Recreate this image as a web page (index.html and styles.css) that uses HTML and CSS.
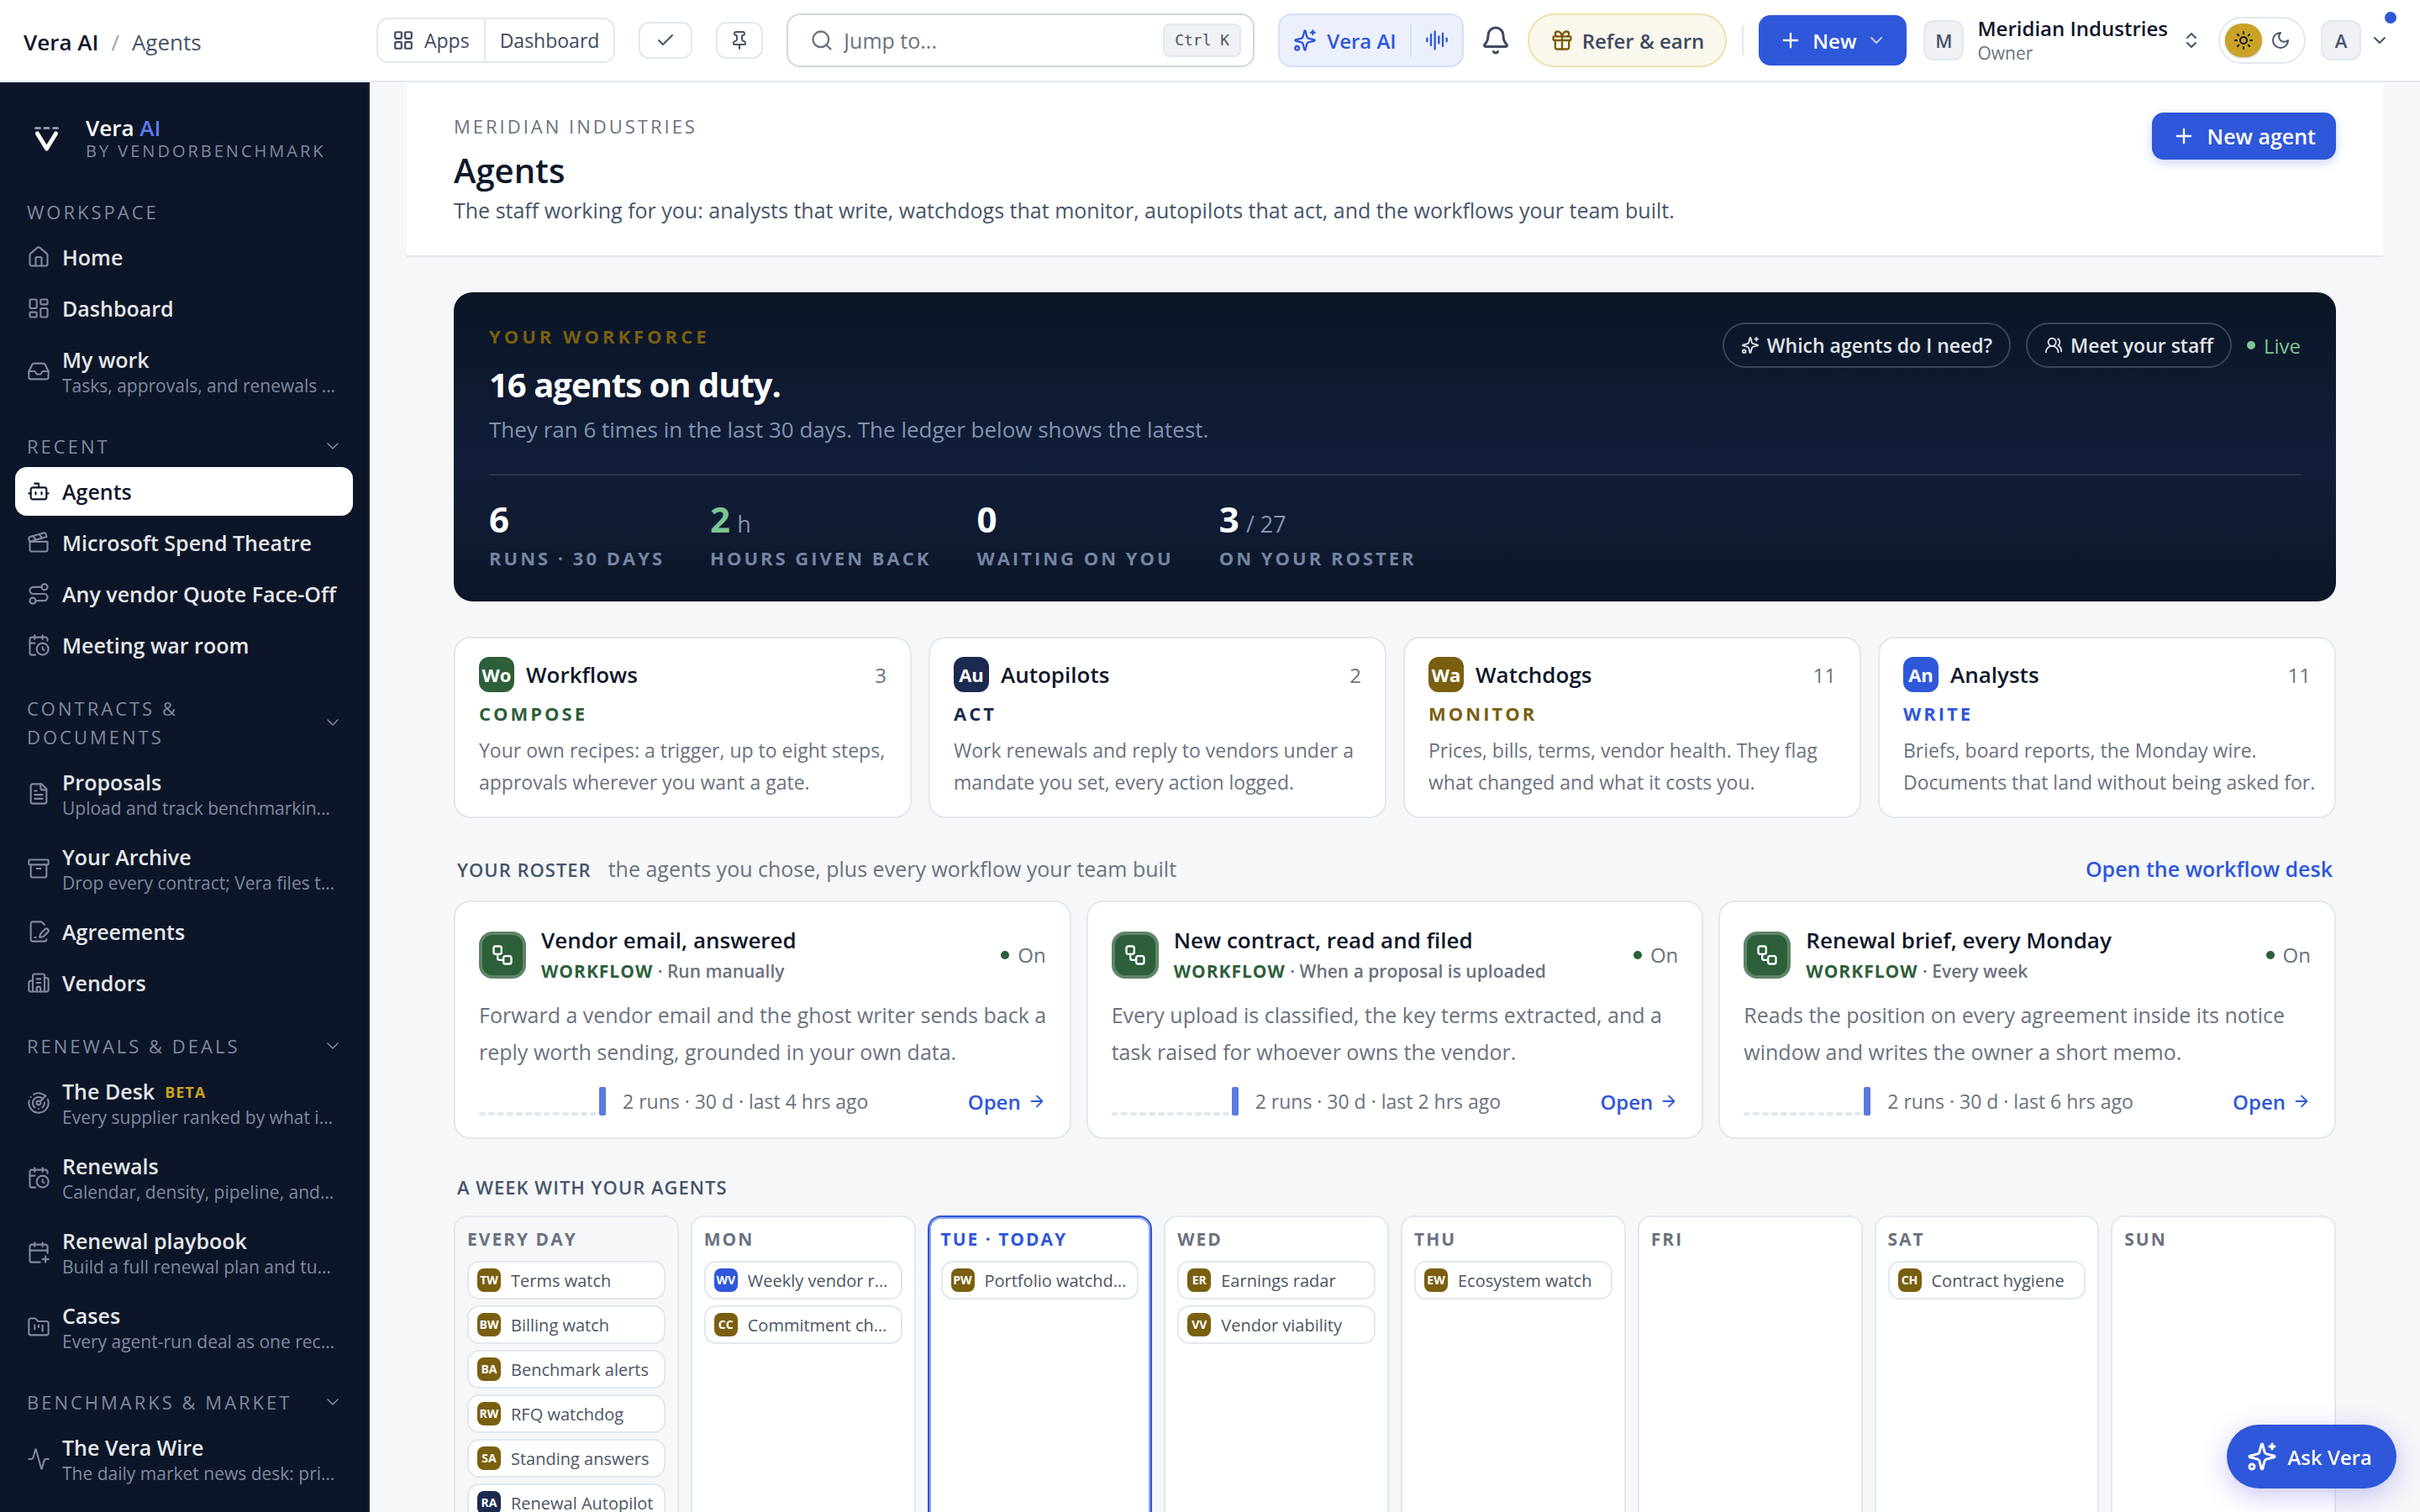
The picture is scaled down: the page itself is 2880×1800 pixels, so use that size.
FILE: index.html
```html
<!DOCTYPE html>
<html lang="en">
<head>
    <meta charset="UTF-8">
    <meta name="viewport" content="width=device-width, initial-scale=1.0">
    <title>Agents - Vera AI</title>
    <link rel="stylesheet" href="styles.css">
</head>
<body>
    <!-- icon sprite -->
    <svg class="sprite" aria-hidden="true">
        <symbol id="i-grid" viewBox="0 0 24 24"><rect x="3" y="3" width="7" height="7" rx="1"/><rect x="14" y="3" width="7" height="7" rx="1"/><rect x="14" y="14" width="7" height="7" rx="1"/><rect x="3" y="14" width="7" height="7" rx="1"/></symbol>
        <symbol id="i-dash" viewBox="0 0 24 24"><rect x="3" y="3" width="7" height="9" rx="1"/><rect x="14" y="3" width="7" height="5" rx="1"/><rect x="14" y="12" width="7" height="9" rx="1"/><rect x="3" y="16" width="7" height="5" rx="1"/></symbol>
        <symbol id="i-check" viewBox="0 0 24 24"><path d="M20 6 9 17l-5-5"/></symbol>
        <symbol id="i-pin" viewBox="0 0 24 24"><path d="M12 17v5"/><path d="M9 10.76a2 2 0 0 1-1.11 1.79l-1.78.9A2 2 0 0 0 5 15.24V16a1 1 0 0 0 1 1h12a1 1 0 0 0 1-1v-.76a2 2 0 0 0-1.11-1.79l-1.78-.9A2 2 0 0 1 15 10.76V7a1 1 0 0 1 1-1 2 2 0 0 0 0-4H8a2 2 0 0 0 0 4 1 1 0 0 1 1 1z"/></symbol>
        <symbol id="i-search" viewBox="0 0 24 24"><circle cx="11" cy="11" r="8"/><path d="m21 21-4.3-4.3"/></symbol>
        <symbol id="i-spark" viewBox="0 0 24 24"><path d="M9.937 15.5A2 2 0 0 0 8.5 14.063l-6.135-1.582a.5.5 0 0 1 0-.962L8.5 9.936A2 2 0 0 0 9.937 8.5l1.582-6.135a.5.5 0 0 1 .963 0L14.063 8.5A2 2 0 0 0 15.5 9.937l6.135 1.581a.5.5 0 0 1 0 .964L15.5 14.063a2 2 0 0 0-1.437 1.437l-1.582 6.135a.5.5 0 0 1-.963 0z"/><path d="M20 2v4"/><path d="M22 4h-4"/><circle cx="4" cy="20" r="2"/></symbol>
        <symbol id="i-audio" viewBox="0 0 24 24"><path d="M2 10v3M6 6v11M10 3v18M14 8v7M18 5v13M22 10v3"/></symbol>
        <symbol id="i-bell" viewBox="0 0 24 24"><path d="M10.268 21a2 2 0 0 0 3.464 0"/><path d="M3.262 15.326A1 1 0 0 0 4 17h16a1 1 0 0 0 .74-1.673C19.41 13.956 18 12.499 18 8A6 6 0 0 0 6 8c0 4.499-1.411 5.956-2.738 7.326"/></symbol>
        <symbol id="i-gift" viewBox="0 0 24 24"><rect x="3" y="8" width="18" height="4" rx="1"/><path d="M12 8v13"/><path d="M19 12v7a2 2 0 0 1-2 2H7a2 2 0 0 1-2-2v-7"/><path d="M7.5 8a2.5 2.5 0 0 1 0-5A4.8 8 0 0 1 12 8a4.8 8 0 0 1 4.5-5 2.5 2.5 0 0 1 0 5"/></symbol>
        <symbol id="i-plus" viewBox="0 0 24 24"><path d="M5 12h14M12 5v14"/></symbol>
        <symbol id="i-down" viewBox="0 0 24 24"><path d="m6 9 6 6 6-6"/></symbol>
        <symbol id="i-updown" viewBox="0 0 24 24"><path d="m7 15 5 5 5-5"/><path d="m7 9 5-5 5 5"/></symbol>
        <symbol id="i-sun" viewBox="0 0 24 24"><circle cx="12" cy="12" r="4"/><path d="M12 2v2M12 20v2M4.93 4.93l1.41 1.41M17.66 17.66l1.41 1.41M2 12h2M20 12h2M6.34 17.66l-1.41 1.41M19.07 4.93l-1.41 1.41"/></symbol>
        <symbol id="i-moon" viewBox="0 0 24 24"><path d="M12 3a6 6 0 0 0 9 9 9 9 0 1 1-9-9Z"/></symbol>
        <symbol id="i-home" viewBox="0 0 24 24"><path d="M15 21v-8a1 1 0 0 0-1-1h-4a1 1 0 0 0-1 1v8"/><path d="M3 10a2 2 0 0 1 .709-1.528l7-5.999a2 2 0 0 1 2.582 0l7 5.999A2 2 0 0 1 21 10v9a2 2 0 0 1-2 2H5a2 2 0 0 1-2-2z"/></symbol>
        <symbol id="i-inbox" viewBox="0 0 24 24"><path d="M22 12h-6l-2 3h-4l-2-3H2"/><path d="M5.45 5.11 2 12v6a2 2 0 0 0 2 2h16a2 2 0 0 0 2-2v-6l-3.45-6.89A2 2 0 0 0 16.76 4H7.24a2 2 0 0 0-1.79 1.11z"/></symbol>
        <symbol id="i-bot" viewBox="0 0 24 24"><path d="M12 8V4H8"/><rect x="4" y="8" width="16" height="12" rx="2"/><path d="M2 14h2M20 14h2M15 13v2M9 13v2"/></symbol>
        <symbol id="i-clap" viewBox="0 0 24 24"><path d="M20.2 6 3 11l-.9-2.4c-.3-1.1.3-2.2 1.3-2.5l13.5-4c1.1-.3 2.2.3 2.5 1.3Z"/><path d="m6.2 5.3 3.1 3.9M12.4 3.4l3.1 4"/><path d="M3 11h18v8a2 2 0 0 1-2 2H5a2 2 0 0 1-2-2Z"/></symbol>
        <symbol id="i-route" viewBox="0 0 24 24"><circle cx="6" cy="19" r="3"/><path d="M9 19h8.5a3.5 3.5 0 0 0 0-7h-11a3.5 3.5 0 0 1 0-7H15"/><circle cx="18" cy="5" r="3"/></symbol>
        <symbol id="i-calclock" viewBox="0 0 24 24"><path d="M16 14v2.2l1.6 1M16 2v4M8 2v4M3 10h5"/><path d="M21 7.5V6a2 2 0 0 0-2-2H5a2 2 0 0 0-2 2v14a2 2 0 0 0 2 2h3.5"/><circle cx="16" cy="16" r="6"/></symbol>
        <symbol id="i-calplus" viewBox="0 0 24 24"><path d="M16 19h6M16 2v4M19 16v6M8 2v4M3 10h18"/><path d="M21 12.598V6a2 2 0 0 0-2-2H5a2 2 0 0 0-2 2v14a2 2 0 0 0 2 2h8.5"/></symbol>
        <symbol id="i-file" viewBox="0 0 24 24"><path d="M15 2H6a2 2 0 0 0-2 2v16a2 2 0 0 0 2 2h12a2 2 0 0 0 2-2V7Z"/><path d="M14 2v4a2 2 0 0 0 2 2h4M10 9H8M16 13H8M16 17H8"/></symbol>
        <symbol id="i-archive" viewBox="0 0 24 24"><rect x="2" y="3" width="20" height="5" rx="1"/><path d="M4 8v11a2 2 0 0 0 2 2h12a2 2 0 0 0 2-2V8M10 12h4"/></symbol>
        <symbol id="i-filepen" viewBox="0 0 24 24"><path d="m18 5-2.414-2.414A2 2 0 0 0 14.172 2H6a2 2 0 0 0-2 2v16a2 2 0 0 0 2 2h12a2 2 0 0 0 2-2"/><path d="M21.378 12.626a1 1 0 0 0-3.004-3.004l-4.01 4.012a2 2 0 0 0-.506.854l-.837 2.87a.5.5 0 0 0 .62.62l2.87-.837a2 2 0 0 0 .854-.506z"/><path d="M8 18h1"/></symbol>
        <symbol id="i-building" viewBox="0 0 24 24"><path d="M10 12h4M10 8h4M14 21v-3a2 2 0 0 0-4 0v3"/><path d="M6 10H4a2 2 0 0 0-2 2v7a2 2 0 0 0 2 2h16a2 2 0 0 0 2-2V9a2 2 0 0 0-2-2h-2"/><path d="M6 21V5a2 2 0 0 1 2-2h8a2 2 0 0 1 2 2v16"/></symbol>
        <symbol id="i-radar" viewBox="0 0 24 24"><path d="M19.07 4.93A10 10 0 0 0 6.99 3.34M4 6h.01M2.29 9.62A10 10 0 1 0 21.31 8.35M16.24 7.76A6 6 0 1 0 8.23 16.67M12 18h.01M17.99 11.66A6 6 0 0 1 15.77 16.67"/><circle cx="12" cy="12" r="2"/><path d="m13.41 10.59 5.66-5.66"/></symbol>
        <symbol id="i-folder" viewBox="0 0 24 24"><path d="M4 20h16a2 2 0 0 0 2-2V8a2 2 0 0 0-2-2h-7.93a2 2 0 0 1-1.66-.9l-.82-1.2A2 2 0 0 0 7.93 3H4a2 2 0 0 0-2 2v13c0 1.1.9 2 2 2Z"/><path d="M8 10v4M12 10v2M16 10v6"/></symbol>
        <symbol id="i-activity" viewBox="0 0 24 24"><path d="M22 12h-2.48a2 2 0 0 0-1.93 1.46l-2.35 8.36a.25.25 0 0 1-.48 0L9.24 2.18a.25.25 0 0 0-.48 0l-2.35 8.36A2 2 0 0 1 4.49 12H2"/></symbol>
        <symbol id="i-users" viewBox="0 0 24 24"><path d="M18 21a8 8 0 0 0-16 0"/><circle cx="10" cy="8" r="5"/><path d="M22 20c0-3.37-2-6.5-4-8a5 5 0 0 0-.45-8.3"/></symbol>
        <symbol id="i-flow" viewBox="0 0 24 24"><rect x="3" y="3" width="8" height="8" rx="2"/><path d="M7 11v4a2 2 0 0 0 2 2h4"/><rect x="13" y="13" width="8" height="8" rx="2"/></symbol>
        <symbol id="i-arrow" viewBox="0 0 24 24"><path d="M5 12h14M12 5l7 7-7 7"/></symbol>
    </svg>

    <header class="topbar">
        <div class="crumbs"><b>Vera AI</b><i>/</i><span>Agents</span></div>
        <div class="switcher">
            <button><svg class="icon"><use href="#i-grid"/></svg>Apps</button>
            <button>Dashboard</button>
        </div>
        <button class="tool tool-check" aria-label="Tasks"><svg class="icon"><use href="#i-check"/></svg></button>
        <button class="tool" aria-label="Pin"><svg class="icon"><use href="#i-pin"/></svg></button>
        <div class="search">
            <svg class="icon"><use href="#i-search"/></svg>
            <input type="text" placeholder="Jump to..." aria-label="Jump to">
            <kbd>Ctrl K</kbd>
        </div>
        <div class="vera">
            <button><svg class="icon"><use href="#i-spark"/></svg>Vera AI</button>
            <button aria-label="Voice"><svg class="icon"><use href="#i-audio"/></svg></button>
        </div>
        <button class="bell" aria-label="Notifications"><svg class="icon"><use href="#i-bell"/></svg></button>
        <button class="refer"><svg class="icon"><use href="#i-gift"/></svg>Refer &amp; earn</button>
        <span class="rule"></span>
        <button class="btn btn-new"><svg class="icon"><use href="#i-plus"/></svg>New<svg class="icon caret"><use href="#i-down"/></svg></button>
        <button class="org">
            <span class="avatar">M</span>
            <span class="org-text"><b>Meridian Industries</b><small>Owner</small></span>
            <svg class="icon"><use href="#i-updown"/></svg>
        </button>
        <div class="theme">
            <button class="on" aria-label="Light"><svg class="icon"><use href="#i-sun"/></svg></button>
            <button aria-label="Dark"><svg class="icon"><use href="#i-moon"/></svg></button>
        </div>
        <button class="user"><span class="avatar">A</span><svg class="icon"><use href="#i-down"/></svg><span class="user-dot"></span></button>
    </header>

    <div class="shell">
        <aside class="sidebar">
            <a class="brand" href="#">
                <svg class="logo" viewBox="0 0 32 32"><path class="dash" d="M2.500 3.500h5M13 3.500h5M23.500 3.500h5"/><path d="M4.500 10 15.500 28 26.500 10"/></svg>
                <span><b>Vera <em>AI</em></b><small>BY VENDORBENCHMARK</small></span>
            </a>
            <nav>
                <div class="group">WORKSPACE</div>
                <a class="item" href="#"><svg class="icon"><use href="#i-home"/></svg><span>Home</span></a>
                <a class="item" href="#"><svg class="icon"><use href="#i-dash"/></svg><span>Dashboard</span></a>
                <a class="item" href="#"><svg class="icon"><use href="#i-inbox"/></svg><span>My work<small>Tasks, approvals, and renewals …</small></span></a>

                <button class="group">RECENT<svg class="icon"><use href="#i-down"/></svg></button>
                <a class="item active" href="#"><svg class="icon"><use href="#i-bot"/></svg><span>Agents</span></a>
                <a class="item" href="#"><svg class="icon"><use href="#i-clap"/></svg><span>Microsoft Spend Theatre</span></a>
                <a class="item" href="#"><svg class="icon"><use href="#i-route"/></svg><span>Any vendor Quote Face-Off</span></a>
                <a class="item" href="#"><svg class="icon"><use href="#i-calclock"/></svg><span>Meeting war room</span></a>

                <button class="group">CONTRACTS &amp;<br>DOCUMENTS<svg class="icon"><use href="#i-down"/></svg></button>
                <a class="item" href="#"><svg class="icon"><use href="#i-file"/></svg><span>Proposals<small>Upload and track benchmarkin…</small></span></a>
                <a class="item" href="#"><svg class="icon"><use href="#i-archive"/></svg><span>Your Archive<small>Drop every contract; Vera files t…</small></span></a>
                <a class="item" href="#"><svg class="icon"><use href="#i-filepen"/></svg><span>Agreements</span></a>
                <a class="item" href="#"><svg class="icon"><use href="#i-building"/></svg><span>Vendors</span></a>

                <button class="group">RENEWALS &amp; DEALS<svg class="icon"><use href="#i-down"/></svg></button>
                <a class="item" href="#"><svg class="icon"><use href="#i-radar"/></svg><span>The Desk<em>BETA</em><small>Every supplier ranked by what i…</small></span></a>
                <a class="item" href="#"><svg class="icon"><use href="#i-calclock"/></svg><span>Renewals<small>Calendar, density, pipeline, and…</small></span></a>
                <a class="item" href="#"><svg class="icon"><use href="#i-calplus"/></svg><span>Renewal playbook<small>Build a full renewal plan and tu…</small></span></a>
                <a class="item" href="#"><svg class="icon"><use href="#i-folder"/></svg><span>Cases<small>Every agent-run deal as one rec…</small></span></a>

                <button class="group">BENCHMARKS &amp; MARKET<svg class="icon"><use href="#i-down"/></svg></button>
                <a class="item" href="#"><svg class="icon"><use href="#i-activity"/></svg><span>The Vera Wire<small>The daily market news desk: pri…</small></span></a>
            </nav>
        </aside>

        <main>
            <div class="page-head">
                <div>
                    <p class="eyebrow">MERIDIAN INDUSTRIES</p>
                    <h1>Agents</h1>
                    <p class="lead">The staff working for you: analysts that write, watchdogs that monitor, autopilots that act, and the workflows your team built.</p>
                </div>
                <button class="btn btn-agent"><svg class="icon"><use href="#i-plus"/></svg>New agent</button>
            </div>

            <div class="content">
                <section class="hero">
                    <div class="hero-top">
                        <div>
                            <p class="hero-eyebrow">YOUR WORKFORCE</p>
                            <h2>16 agents on duty.</h2>
                            <p class="hero-sub">They ran 6 times in the last 30 days. The ledger below shows the latest.</p>
                        </div>
                        <div class="hero-actions">
                            <button><svg class="icon"><use href="#i-spark"/></svg>Which agents do I need?</button>
                            <button><svg class="icon"><use href="#i-users"/></svg>Meet your staff</button>
                            <span class="live">Live</span>
                        </div>
                    </div>
                    <div class="stats">
                        <div><strong>6</strong><p>RUNS · 30 DAYS</p></div>
                        <div><strong class="good">2</strong> <span>h</span><p>HOURS GIVEN BACK</p></div>
                        <div><strong>0</strong><p>WAITING ON YOU</p></div>
                        <div><strong>3</strong> <span>/ 27</span><p>ON YOUR ROSTER</p></div>
                    </div>
                </section>

                <section class="kinds">
                    <a class="card kind green" href="#">
                        <div class="kind-head"><span class="badge">Wo</span><h3>Workflows</h3><span class="count">3</span></div>
                        <p class="verb">COMPOSE</p>
                        <p class="desc">Your own recipes: a trigger, up to eight steps,<br>approvals wherever you want a gate.</p>
                    </a>
                    <a class="card kind navy" href="#">
                        <div class="kind-head"><span class="badge">Au</span><h3>Autopilots</h3><span class="count">2</span></div>
                        <p class="verb">ACT</p>
                        <p class="desc">Work renewals and reply to vendors under a<br>mandate you set, every action logged.</p>
                    </a>
                    <a class="card kind gold" href="#">
                        <div class="kind-head"><span class="badge">Wa</span><h3>Watchdogs</h3><span class="count">11</span></div>
                        <p class="verb">MONITOR</p>
                        <p class="desc">Prices, bills, terms, vendor health. They flag<br>what changed and what it costs you.</p>
                    </a>
                    <a class="card kind blue" href="#">
                        <div class="kind-head"><span class="badge">An</span><h3>Analysts</h3><span class="count">11</span></div>
                        <p class="verb">WRITE</p>
                        <p class="desc">Briefs, board reports, the Monday wire.<br>Documents that land without being asked for.</p>
                    </a>
                </section>

                <div class="section-head">
                    <h2>YOUR ROSTER</h2>
                    <p>the agents you chose, plus every workflow your team built</p>
                    <a href="#">Open the workflow desk</a>
                </div>
                <section class="roster">
                    <article class="card agent">
                        <div class="agent-head">
                            <span class="tile"><svg class="icon"><use href="#i-flow"/></svg></span>
                            <div><h3>Vendor email, answered</h3><p><b>WORKFLOW</b> · Run manually</p></div>
                            <span class="state">On</span>
                        </div>
                        <p class="agent-desc">Forward a vendor email and the ghost writer sends back a<br>reply worth sending, grounded in your own data.</p>
                        <div class="agent-foot">
                            <span class="bars"><i></i><i></i><i></i><i></i><i></i><i></i><i></i><i></i><i></i><i></i><i></i><i></i><i></i><i class="full"></i></span>
                            <span>2 runs · 30 d · last 4 hrs ago</span>
                            <a href="#">Open<svg class="icon"><use href="#i-arrow"/></svg></a>
                        </div>
                    </article>
                    <article class="card agent">
                        <div class="agent-head">
                            <span class="tile"><svg class="icon"><use href="#i-flow"/></svg></span>
                            <div><h3>New contract, read and filed</h3><p><b>WORKFLOW</b> · When a proposal is uploaded</p></div>
                            <span class="state">On</span>
                        </div>
                        <p class="agent-desc">Every upload is classified, the key terms extracted, and a<br>task raised for whoever owns the vendor.</p>
                        <div class="agent-foot">
                            <span class="bars"><i></i><i></i><i></i><i></i><i></i><i></i><i></i><i></i><i></i><i></i><i></i><i></i><i></i><i class="full"></i></span>
                            <span>2 runs · 30 d · last 2 hrs ago</span>
                            <a href="#">Open<svg class="icon"><use href="#i-arrow"/></svg></a>
                        </div>
                    </article>
                    <article class="card agent">
                        <div class="agent-head">
                            <span class="tile"><svg class="icon"><use href="#i-flow"/></svg></span>
                            <div><h3>Renewal brief, every Monday</h3><p><b>WORKFLOW</b> · Every week</p></div>
                            <span class="state">On</span>
                        </div>
                        <p class="agent-desc">Reads the position on every agreement inside its notice<br>window and writes the owner a short memo.</p>
                        <div class="agent-foot">
                            <span class="bars"><i></i><i></i><i></i><i></i><i></i><i></i><i></i><i></i><i></i><i></i><i></i><i></i><i></i><i class="full"></i></span>
                            <span>2 runs · 30 d · last 6 hrs ago</span>
                            <a href="#">Open<svg class="icon"><use href="#i-arrow"/></svg></a>
                        </div>
                    </article>
                </section>

                <div class="section-head week-head">
                    <h2>A WEEK WITH YOUR AGENTS</h2>
                </div>
                <section class="week">
                    <div class="day every">
                        <h4>EVERY DAY</h4>
                        <a class="chip gold" href="#"><b>TW</b><span>Terms watch</span></a>
                        <a class="chip gold" href="#"><b>BW</b><span>Billing watch</span></a>
                        <a class="chip gold" href="#"><b>BA</b><span>Benchmark alerts</span></a>
                        <a class="chip gold" href="#"><b>RW</b><span>RFQ watchdog</span></a>
                        <a class="chip gold" href="#"><b>SA</b><span>Standing answers</span></a>
                        <a class="chip navy" href="#"><b>RA</b><span>Renewal Autopilot</span></a>
                    </div>
                    <div class="day">
                        <h4>MON</h4>
                        <a class="chip blue" href="#"><b>WV</b><span>Weekly vendor r…</span></a>
                        <a class="chip gold" href="#"><b>CC</b><span>Commitment ch…</span></a>
                    </div>
                    <div class="day today">
                        <h4>TUE · TODAY</h4>
                        <a class="chip gold" href="#"><b>PW</b><span>Portfolio watchd…</span></a>
                    </div>
                    <div class="day">
                        <h4>WED</h4>
                        <a class="chip gold" href="#"><b>ER</b><span>Earnings radar</span></a>
                        <a class="chip gold" href="#"><b>VV</b><span>Vendor viability</span></a>
                    </div>
                    <div class="day">
                        <h4>THU</h4>
                        <a class="chip gold" href="#"><b>EW</b><span>Ecosystem watch</span></a>
                    </div>
                    <div class="day"><h4>FRI</h4></div>
                    <div class="day">
                        <h4>SAT</h4>
                        <a class="chip gold" href="#"><b>CH</b><span>Contract hygiene</span></a>
                    </div>
                    <div class="day"><h4>SUN</h4></div>
                </section>
            </div>
        </main>
    </div>

    <button class="ask"><svg class="icon"><use href="#i-spark"/></svg>Ask Vera</button>
</body>
</html>
```
FILE: styles.css
```css
:root {
    --ink: #0f172a;
    --slate: #475569;
    --muted: #6b7280;
    --line: #e2e8f0;
    --blue: #2f57d9;
    --green: #2d5f3a;
    --gold: #7a5f10;
    --navy: #1b2a4e;
}
* {
    box-sizing: border-box;
}
body {
    margin: 0;
    height: 100vh;
    display: flex;
    flex-direction: column;
    overflow: hidden;
    background: #f5f7f9;
    color: var(--ink);
    font-family: "Open Sans", "Noto Sans", sans-serif;
    font-size: 24px;
}
h1, h2, h3, h4, p {
    margin: 0;
}
a {
    color: inherit;
    text-decoration: none;
}
button, input {
    font: inherit;
    color: inherit;
    background: none;
    border: 0;
    padding: 0;
}
button {
    cursor: pointer;
    white-space: nowrap;
}
small, em, i {
    font-style: normal;
}
.sprite {
    display: none;
}
.icon {
    width: 28px;
    height: 28px;
    flex: none;
    fill: none;
    stroke: currentColor;
    stroke-width: 2;
    stroke-linecap: round;
    stroke-linejoin: round;
}

/* top bar */
.topbar {
    flex: none;
    height: 98px;
    padding: 0 28px;
    display: flex;
    align-items: center;
    background: #fff;
    border-bottom: 2px solid var(--line);
}
.topbar button {
    display: flex;
    align-items: center;
    justify-content: center;
}
.crumbs {
    width: 420px;
    display: flex;
    gap: 15px;
    font-size: 26px;
    padding-top: 4px;
}
.crumbs b {
    font-weight: 600;
}
.crumbs i {
    color: #9ca3af;
}
.crumbs span {
    color: var(--slate);
}
.switcher {
    display: flex;
    height: 54px;
    border: 2px solid var(--line);
    border-radius: 14px;
    color: #3f4a5f;
    font-weight: 500;
    font-size: 23px;
}
.switcher button {
    padding: 0 17px;
    gap: 12px;
}
.switcher button + button {
    border-left: 2px solid var(--line);
}
.switcher .icon {
    width: 26px;
    height: 26px;
}
.topbar .tool {
    width: 56px;
    height: 44px;
    margin-left: 28px;
    border: 2px solid var(--line);
    border-radius: 12px;
    color: var(--slate);
}
.topbar .tool-check {
    width: 64px;
}
.tool .icon {
    width: 24px;
    height: 24px;
}
.search {
    flex: 1;
    height: 64px;
    margin: 0 28px;
    padding: 0 14px 0 26px;
    display: flex;
    align-items: center;
    gap: 12px;
    border: 2px solid #d0d6e2;
    border-radius: 16px;
    color: var(--muted);
}
.search input {
    flex: 1;
    min-width: 0;
    font-size: 25px;
    outline: none;
}
.search input::placeholder {
    color: var(--muted);
    opacity: 1;
}
.search kbd {
    height: 40px;
    padding: 0 12px;
    line-height: 36px;
    background: #eff1f5;
    border: 2px solid var(--line);
    border-radius: 8px;
    font-family: "DejaVu Sans Mono", monospace;
    font-size: 18px;
    color: #4b5563;
}
.vera {
    height: 64px;
    display: flex;
    align-items: center;
    background: #ecf0fd;
    border: 2px solid #d6dffa;
    border-radius: 16px;
    color: var(--blue);
    font-weight: 600;
}
.vera button {
    height: 40px;
    gap: 12px;
    padding: 0 16px;
}
.vera button + button {
    border-left: 2px solid #d6dffa;
}
.bell {
    width: 76px;
    color: #3f4a5f;
}
.bell .icon {
    width: 36px;
    height: 36px;
}
.topbar .refer {
    height: 64px;
    padding: 0 25px;
    gap: 10px;
    background: #faf7ed;
    border: 2px solid #efe1ac;
    border-radius: 32px;
    font-weight: 600;
    color: #3f4a5f;
}
.refer .icon {
    color: #7a5c0a;
}
.rule {
    width: 2px;
    height: 36px;
    margin: 0 18px;
    background: var(--line);
}
.btn {
    display: flex;
    align-items: center;
    background: var(--blue);
    color: #fff;
    font-weight: 600;
    border-radius: 14px;
}
.btn-new {
    height: 60px;
    padding: 0 24px;
    gap: 12px;
}
.btn-new .caret {
    width: 24px;
    height: 24px;
    opacity: .7;
}
.avatar {
    width: 48px;
    height: 48px;
    line-height: 44px;
    text-align: center;
    background: #eff1f5;
    border: 2px solid var(--line);
    border-radius: 12px;
    font-size: 22px;
    font-weight: 600;
    color: var(--slate);
}
.org {
    margin: 0 20px;
    gap: 16px;
    text-align: left;
}
.org b, .org small {
    display: block;
}
.org b {
    font-size: 24px;
    font-weight: 600;
    line-height: 30px;
}
.org small {
    font-size: 21px;
    line-height: 28px;
    color: var(--muted);
}
.org .icon, .user .icon {
    width: 24px;
    height: 24px;
    color: var(--slate);
}
.theme {
    height: 56px;
    padding: 0 6px;
    display: flex;
    align-items: center;
    border: 2px solid var(--line);
    border-radius: 28px;
    color: var(--slate);
}
.theme button {
    width: 44px;
    height: 40px;
    border-radius: 20px;
}
.theme .icon {
    width: 24px;
    height: 24px;
}
.theme .on {
    background: #c9a227;
    color: #111827;
    box-shadow: 0 1px 3px rgba(0, 0, 0, .25);
}
.user {
    position: relative;
    margin-left: 18px;
    padding-right: 8px;
    gap: 10px;
}
.user-dot {
    position: absolute;
    top: -10px;
    right: 0;
    width: 14px;
    height: 14px;
    border-radius: 50%;
    background: var(--blue);
}

/* sidebar */
.shell {
    flex: 1;
    min-height: 0;
    display: flex;
}
.sidebar {
    flex: none;
    width: 440px;
    padding: 32px 18px 0;
    overflow: hidden;
    background: #0d1628;
    border-right: 2px solid #1d2739;
    color: #e5e7eb;
}
.brand {
    display: flex;
    align-items: center;
    padding-left: 22px;
    height: 68px;
    margin-bottom: 8px;
}
.logo {
    width: 32px;
    height: 32px;
    margin: 2px 30px 0 0;
    fill: none;
    stroke: #fff;
    stroke-width: 5;
    stroke-linecap: round;
    stroke-linejoin: round;
}
.logo .dash {
    stroke: #8f95a1;
    stroke-width: 3;
}
.brand b, .brand small {
    display: block;
}
.brand b {
    color: #fff;
    font-size: 26px;
    font-weight: 600;
    line-height: 32px;
}
.brand em {
    color: #5b7cf0;
}
.brand small {
    font-size: 20px;
    line-height: 24px;
    letter-spacing: 3px;
    color: #8089a0;
}
.group {
    width: 100%;
    display: flex;
    align-items: center;
    justify-content: space-between;
    padding: 29px 12px 8px 14px;
    text-align: left;
    font-size: 22px;
    font-weight: 500;
    line-height: 34px;
    letter-spacing: 3px;
    color: #8089a0;
}
.group .icon {
    width: 24px;
    height: 24px;
    stroke-width: 1.5;
}
.item {
    display: flex;
    align-items: center;
    gap: 14px;
    width: 402px;
    min-height: 58px;
    padding: 12px 0 12px 14px;
    margin-bottom: 3px;
    border-radius: 14px;
    font-size: 25px;
    font-weight: 600;
    line-height: 34px;
    white-space: nowrap;
}
.item:has(+ .group) {
    margin-bottom: 0;
}
.item .icon {
    color: #8089a0;
    stroke-width: 1.8;
}
.item small {
    display: block;
    font-size: 21px;
    font-weight: 500;
    line-height: 28px;
    color: #8089a0;
}
.item em {
    margin-left: 12px;
    font-size: 18px;
    font-weight: 700;
    letter-spacing: 1px;
    vertical-align: 2px;
    line-height: 20px;
    color: #c9a227;
}
.item.active {
    background: #fff;
    color: var(--ink);
}
.item.active .icon {
    color: var(--ink);
}

/* page head */
main {
    flex: 1;
    min-width: 0;
    padding: 0 44px;
}
.page-head {
    display: flex;
    align-items: flex-start;
    justify-content: space-between;
    padding: 36px 56px;
    background: #fff;
    border-bottom: 2px solid var(--line);
}
.eyebrow {
    font-size: 22px;
    line-height: 32px;
    letter-spacing: 3px;
    color: var(--muted);
}
h1 {
    margin-top: 12px;
    font-size: 40px;
    font-weight: 600;
    line-height: 50px;
}
.lead {
    margin-top: 4px;
    font-size: 25px;
    line-height: 36px;
    color: var(--slate);
}
.btn-agent {
    height: 56px;
    padding: 0 24px;
    gap: 14px;
    font-size: 25px;
    box-shadow: 0 4px 12px rgba(47, 87, 217, .25);
}
.content {
    padding: 42px 56px 0;
}

/* hero */
.hero {
    padding: 36px 42px;
    border-radius: 22px;
    background: linear-gradient(180deg, #0a1525 0%, #121e3a 55%, #0d1628 100%);
    color: #fff;
}
.hero-top {
    display: flex;
    justify-content: space-between;
    align-items: flex-start;
    padding-bottom: 33px;
    border-bottom: 2px solid #28334c;
}
.hero-eyebrow {
    font-size: 22px;
    font-weight: 700;
    line-height: 32px;
    letter-spacing: 4px;
    color: #7a5f10;
}
.hero h2 {
    margin-top: 16px;
    font-size: 40px;
    line-height: 52px;
    letter-spacing: -1px;
}
.hero-sub {
    margin-top: 7px;
    font-size: 26px;
    line-height: 40px;
    color: #8493b0;
}
.hero-actions {
    display: flex;
    align-items: center;
    gap: 18px;
}
.hero-actions button {
    display: flex;
    align-items: center;
    gap: 9px;
    height: 54px;
    padding: 0 20px;
    border: 2px solid #3b4558;
    border-radius: 27px;
    font-size: 23px;
    font-weight: 600;
    color: #e2e4e9;
}
.hero-actions .icon {
    width: 22px;
    height: 22px;
}
.live, .state {
    display: flex;
    align-items: center;
    gap: 10px;
    color: #7cc492;
}
.live::before, .state::before {
    content: "";
    width: 10px;
    height: 10px;
    border-radius: 50%;
    background: currentColor;
}
.stats {
    display: flex;
    gap: 54px;
    padding-top: 26px;
}
.stats strong {
    font-size: 42px;
    line-height: 52px;
}
.stats .good {
    color: #7cc492;
}
.stats span {
    margin-left: 2px;
    font-size: 27px;
    color: #8493b0;
}
.stats p {
    margin-top: 4px;
    font-size: 22px;
    font-weight: 700;
    line-height: 32px;
    letter-spacing: 3px;
    color: #7585a3;
}

/* cards */
.card {
    background: #fff;
    border: 2px solid var(--line);
    border-radius: 20px;
}
.green { --tone: var(--green); }
.navy { --tone: var(--navy); }
.gold { --tone: var(--gold); }
.blue { --tone: var(--blue); }
.kinds {
    display: grid;
    grid-template-columns: repeat(4, minmax(0, 1fr));
    gap: 20px;
    margin-top: 42px;
}
.kind {
    padding: 22px 28px;
}
.kind-head {
    display: flex;
    align-items: center;
    gap: 14px;
}
.badge {
    width: 42px;
    height: 42px;
    border-radius: 12px;
    background: var(--tone);
    color: #fff;
    font-size: 22px;
    font-weight: 700;
    line-height: 42px;
    text-align: center;
}
.kind h3, .agent h3 {
    font-size: 26px;
    font-weight: 600;
    line-height: 36px;
}
.count {
    margin-left: auto;
    color: var(--muted);
}
.verb {
    margin-top: 8px;
    font-size: 22px;
    font-weight: 700;
    line-height: 34px;
    letter-spacing: 3px;
    color: var(--tone);
}
.desc {
    margin-top: 8px;
    font-size: 23px;
    line-height: 38px;
    color: var(--muted);
    white-space: nowrap;
}
.section-head {
    display: flex;
    align-items: baseline;
    margin: 40px 4px 17px;
    line-height: 40px;
}
.section-head h2 {
    font-size: 22px;
    font-weight: 600;
    letter-spacing: 1px;
    color: var(--slate);
}
.section-head p {
    margin-left: 20px;
    font-size: 25px;
    color: var(--muted);
}
.section-head a {
    margin-left: auto;
    font-size: 25px;
    font-weight: 600;
    color: var(--blue);
}
.roster {
    display: grid;
    grid-template-columns: repeat(3, minmax(0, 1fr));
    gap: 18px;
}
.agent {
    padding: 27px 28px 26px;
}
.agent-head {
    display: flex;
    align-items: center;
    gap: 18px;
}
.tile {
    width: 56px;
    height: 56px;
    display: flex;
    align-items: center;
    justify-content: center;
    background: var(--green);
    border: 4px solid #5f8569;
    border-radius: 16px;
    color: #fff;
}
.agent-head p {
    margin-top: 3px;
    font-size: 21px;
    font-weight: 600;
    line-height: 32px;
    color: var(--muted);
}
.agent-head b {
    color: var(--green);
    font-weight: 700;
    letter-spacing: 1px;
}
.state {
    margin-left: auto;
    color: var(--muted);
}
.state::before {
    background: var(--green);
}
.agent-desc {
    margin-top: 14px;
    font-size: 25px;
    line-height: 44px;
    color: var(--muted);
    white-space: nowrap;
}
.agent-foot {
    display: flex;
    align-items: center;
    gap: 20px;
    height: 34px;
    margin-top: 20px;
    font-size: 23px;
    color: var(--muted);
}
.bars {
    width: 151px;
    height: 34px;
    display: flex;
    align-items: flex-end;
    gap: 3px;
}
.bars i {
    flex: 1;
    height: 4px;
    border-radius: 2px;
    background: var(--line);
}
.bars .full {
    height: 100%;
    background: #5b7ae0;
}
.agent-foot a {
    margin-left: auto;
    display: flex;
    align-items: center;
    gap: 8px;
    font-size: 24px;
    font-weight: 600;
    color: var(--blue);
}
.agent-foot .icon {
    width: 22px;
    height: 22px;
}

/* week */
.week-head {
    margin: 37px 4px 14px;
}
.week {
    display: grid;
    grid-template-columns: repeat(8, minmax(0, 1fr));
    gap: 14px;
}
.day {
    display: flex;
    flex-direction: column;
    gap: 7px;
    min-height: 400px;
    padding: 12px 14px;
    background: #fff;
    border: 2px solid var(--line);
    border-radius: 16px;
}
.day h4 {
    margin-bottom: 5px;
    font-size: 21px;
    font-weight: 700;
    line-height: 28px;
    letter-spacing: 2px;
    color: var(--muted);
}
.every {
    background: #f5f7f9;
}
.today {
    border-color: var(--blue);
    box-shadow: inset 0 0 0 2px #8ea3e9;
}
.day.today h4 {
    color: var(--blue);
}
.chip {
    display: flex;
    align-items: center;
    gap: 12px;
    height: 46px;
    padding: 0 10px;
    background: #fff;
    border: 2px solid var(--line);
    border-radius: 14px;
    font-size: 20px;
    color: #4b5563;
    white-space: nowrap;
}
.chip b {
    flex: none;
    width: 28px;
    height: 28px;
    border-radius: 8px;
    background: var(--tone);
    color: #fff;
    font-size: 14px;
    line-height: 28px;
    text-align: center;
}

.ask {
    position: fixed;
    right: 28px;
    bottom: 28px;
    display: flex;
    align-items: center;
    gap: 12px;
    height: 76px;
    padding: 0 29px 0 24px;
    border-radius: 38px;
    background: var(--blue);
    color: #fff;
    font-size: 24px;
    font-weight: 600;
    box-shadow: 0 8px 32px rgba(79, 70, 229, .3);
}
.ask .icon {
    width: 36px;
    height: 36px;
}
```
